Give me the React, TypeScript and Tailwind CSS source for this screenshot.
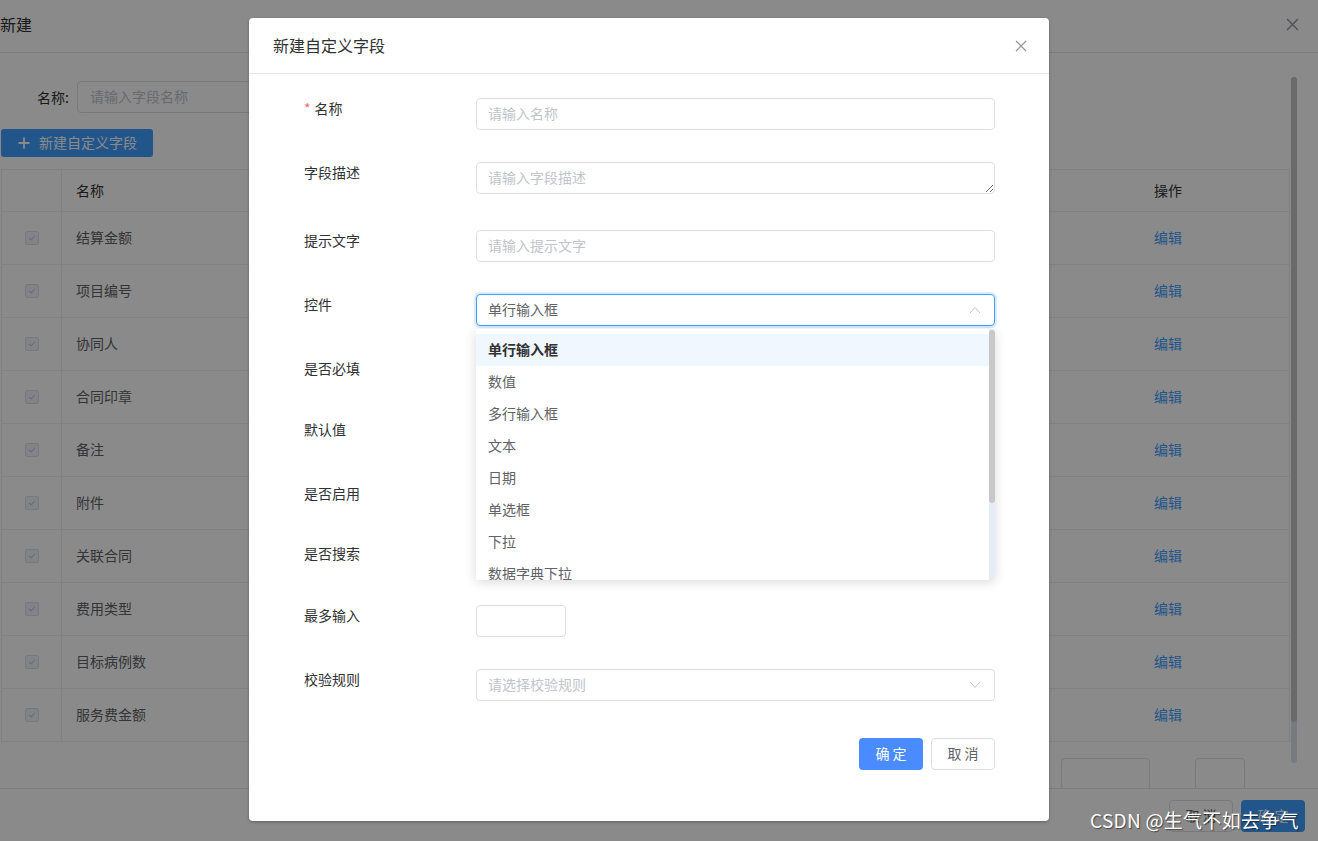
import React from 'react';

const font = { fontFamily: '"Microsoft YaHei", "Noto Sans CJK SC", "Noto Sans", sans-serif' };

const rows = ['结算金额', '项目编号', '协同人', '合同印章', '备注', '附件', '关联合同', '费用类型', '目标病例数', '服务费金额'];
const options = ['单行输入框', '数值', '多行输入框', '文本', '日期', '单选框', '下拉', '数据字典下拉'];

function CloseIcon({ className }: { className?: string }) {
  return (
    <svg viewBox="0 0 12 12" className={className} fill="none" stroke="currentColor" strokeWidth="1.2">
      <path d="M1 1L11 11M11 1L1 11" />
    </svg>
  );
}

function Chevron({ up }: { up?: boolean }) {
  return (
    <svg viewBox="0 0 12 8" className="w-[12px] h-[8px] text-[#c0c4cc]" fill="none" stroke="currentColor" strokeWidth="1">
      {up ? <path d="M1 7L6 1.5L11 7" /> : <path d="M1 1L6 6.5L11 1" />}
    </svg>
  );
}

function Checkbox() {
  return (
    <span className="flex items-center justify-center w-[14px] h-[14px] rounded-[2px] border border-[#dcdfe6] bg-[#edf2fc]">
      <svg viewBox="0 0 10 8" className="w-[8px] h-[6px]" fill="none" stroke="#c0c4cc" strokeWidth="1.4">
        <path d="M1 4L4 6.5L9 1" />
      </svg>
    </span>
  );
}

function Label({ text, required }: { text: string; required?: boolean }) {
  return (
    <div className="w-[172px] shrink-0 text-[14px] leading-[20px] text-[#303133]">
      {required && <span className="text-[#f56c6c] mr-[4px]">*</span>}
      {text}
    </div>
  );
}

function TextInput({ placeholder }: { placeholder: string }) {
  return (
    <div className="w-[519px] h-[32px] border border-[#dcdfe6] rounded-[4px] px-[11px] pb-[2px] flex items-center text-[14px] text-[#c0c4cc]">
      {placeholder}
    </div>
  );
}

function FormRow({ h, label, required, children }: { h: string; label: string; required?: boolean; children?: React.ReactNode }) {
  return (
    <div className={`flex ${h}`}>
      <Label text={label} required={required} />
      <div className="relative">{children}</div>
    </div>
  );
}

export default function App() {
  return (
    <div className="relative w-[1318px] h-[841px] overflow-hidden bg-white" style={font}>
      {/* background page */}
      <div className="flex flex-col h-full">
        <div className="h-[53px] shrink-0 border-b border-[#e4e7ed] flex items-center justify-between pr-[19px]">
          <span className="text-[16px] text-[#303133] -mt-[4px]">新建</span>
          <CloseIcon className="w-[13px] h-[13px] text-[#909399] -mt-[3px]" />
        </div>

        <div className="relative flex-1 overflow-hidden">
          <div className="pt-[28px]">
            <div className="flex items-center h-[32px] pl-[37px]">
              <span className="text-[14px] text-[#303133]">名称:</span>
              <div className="ml-[8px] w-[300px] h-[32px] border border-[#dcdfe6] rounded-[4px] px-[12px] pb-[2px] flex items-center text-[14px] text-[#c0c4cc]">
                请输入字段名称
              </div>
            </div>

            <button className="mt-[16px] ml-[1px] w-[152px] h-[28px] rounded-[3px] bg-[#409eff] text-white text-[14px] flex items-center pl-[17px] gap-[9px]">
              <svg viewBox="0 0 12 12" className="w-[12px] h-[12px]" fill="none" stroke="currentColor" strokeWidth="1.8">
                <path d="M6 0.5V11.5M0.5 6H11.5" />
              </svg>
              <span className="-mt-[1px]">新建自定义字段</span>
            </button>

            <div className="mt-[12px] ml-[1px] w-[1289px] border border-[#ebeef5] border-b-0">
              <div className="flex h-[42px] border-b border-[#ebeef5] text-[14px] text-[#303133]">
                <div className="w-[60px] border-r border-[#ebeef5]" />
                <div className="flex-1 flex items-center pl-[14px]">名称</div>
                <div className="w-[190px] flex items-center pl-[55px]">操作</div>
              </div>
              {rows.map((r) => (
                <div key={r} className="flex h-[53px] border-b border-[#ebeef5] text-[14px] text-[#606266]">
                  <div className="w-[60px] border-r border-[#ebeef5] flex items-center justify-center">
                    <Checkbox />
                  </div>
                  <div className="flex-1 flex items-center pl-[14px] pb-[1px]">{r}</div>
                  <div className="w-[190px] flex items-center pl-[55px] pb-[1px] text-[#409eff]">编辑</div>
                </div>
              ))}
            </div>

            <div className="flex justify-end gap-[45px] pr-[73px] pt-[16px]">
              <div className="w-[89px] h-[32px] border border-[#dcdfe6] rounded-[4px]" />
              <div className="w-[50px] h-[32px] border border-[#dcdfe6] rounded-[4px]" />
            </div>
          </div>

          {/* page scrollbar */}
          <div className="absolute left-[1291px] top-[24px] w-[6px] h-[686px] rounded-[3px] bg-[#dde3ec]">
            <div className="w-[6px] h-[645px] rounded-[3px] bg-[#c4c4c4]" />
          </div>
        </div>

        <div className="h-[53px] shrink-0 border-t border-[#e4e7ed] flex items-center justify-end gap-[8px] pr-[13px] pt-[1px]">
          <button className="w-[64px] h-[32px] rounded-[4px] border border-[#dcdfe6] bg-white text-[14px] text-[#606266]">取 消</button>
          <button className="w-[64px] h-[32px] rounded-[4px] bg-[#409eff] text-[14px] text-white">确 定</button>
        </div>
      </div>

      {/* mask */}
      <div className="absolute inset-0 bg-black/[0.46]" />

      {/* dialog */}
      <div className="absolute left-[249px] top-[18px] w-[800px] h-[803px] bg-white rounded-[4px] shadow-[0_1px_3px_rgba(0,0,0,0.3)] flex flex-col">
        <div className="h-[56px] shrink-0 border-b border-[#e8e8e8] flex items-center justify-between pl-[24px] pr-[22px]">
          <span className="text-[16px] text-[#303133] -mt-[1px]">新建自定义字段</span>
          <CloseIcon className="w-[12px] h-[12px] text-[#909399]" />
        </div>

        <div className="pt-[24px] pl-[55px] pr-[54px]">
          <FormRow h="h-[64px]" label="名称" required>
            <TextInput placeholder="请输入名称" />
          </FormRow>
          <FormRow h="h-[68px]" label="字段描述">
            <textarea
              rows={1}
              placeholder="请输入字段描述"
              className="block w-[519px] h-[32px] border border-[#dcdfe6] rounded-[4px] px-[11px] py-[4px] text-[14px] leading-[20px] text-[#606266] placeholder:text-[#c0c4cc] outline-none"
            />
          </FormRow>
          <FormRow h="h-[64px]" label="提示文字">
            <TextInput placeholder="请输入提示文字" />
          </FormRow>
          <FormRow h="h-[64px]" label="控件">
            <div className="w-[519px] h-[32px] border border-[#409eff] rounded-[4px] ring-2 ring-[#409eff]/20 pl-[11px] pr-[13px] pb-[2px] flex items-center justify-between text-[14px] text-[#606266]">
              单行输入框
              <span className="mt-[2px]">
                <Chevron up />
              </span>
            </div>
            {/* dropdown */}
            <div className="absolute left-0 top-[35px] z-10 w-[519px] h-[251px] bg-white rounded-[2px] shadow-[0_2px_12px_rgba(0,0,0,0.15)] overflow-hidden flex">
              <div className="flex-1 pt-[5px]">
                {options.map((o, i) => (
                  <div
                    key={o}
                    className={`h-[32px] flex items-center pl-[12px] pb-[2px] text-[14px] ${i === 0 ? 'bg-[#f0f7ff] text-[#303133] font-bold' : 'text-[#606266]'}`}
                  >
                    {o}
                  </div>
                ))}
              </div>
              <div className="w-[6px] bg-[#e6ecf5] flex flex-col">
                <div className="mt-[1px] h-[173px] rounded-[3px] bg-[#c8c8c8]" />
              </div>
            </div>
          </FormRow>
          <FormRow h="h-[61px]" label="是否必填" />
          <FormRow h="h-[64px]" label="默认值" />
          <FormRow h="h-[60px]" label="是否启用" />
          <FormRow h="h-[62px]" label="是否搜索" />
          <FormRow h="h-[64px]" label="最多输入">
            <div className="w-[90px] h-[32px] border border-[#dcdfe6] rounded-[4px]" />
          </FormRow>
          <FormRow h="h-[69px]" label="校验规则">
            <div className="w-[519px] h-[32px] border border-[#dcdfe6] rounded-[4px] pl-[11px] pr-[13px] pb-[2px] flex items-center justify-between text-[14px] text-[#c0c4cc]">
              请选择校验规则
              <span className="mt-[2px]">
                <Chevron />
              </span>
            </div>
          </FormRow>

          <div className="flex justify-end gap-[8px]">
            <button className="w-[64px] h-[32px] rounded-[4px] bg-[#4a8cff] text-[14px] text-white pb-[2px]">确 定</button>
            <button className="w-[64px] h-[32px] rounded-[4px] border border-[#dcdfe6] bg-white text-[14px] text-[#606266] pb-[2px]">取 消</button>
          </div>
        </div>
      </div>

      {/* watermark */}
      <div className="absolute left-[1090px] top-[807px] text-[19px] tracking-[0.3px] leading-[26px] text-white [text-shadow:1px_1px_1px_rgba(0,0,0,0.5)] whitespace-nowrap">
        CSDN @生气不如去争气
      </div>
    </div>
  );
}
